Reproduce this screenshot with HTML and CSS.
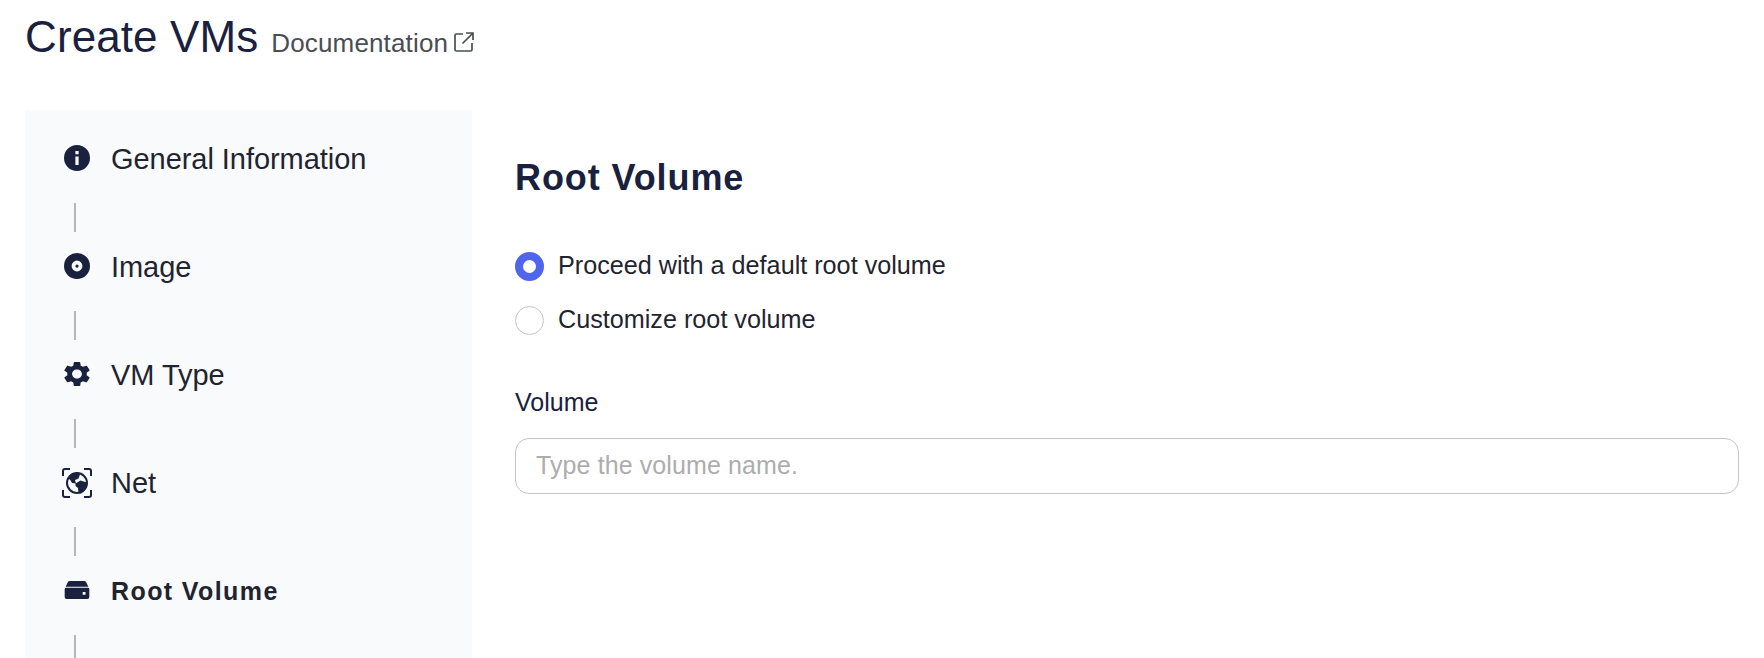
FILE: index.html

```html
<!DOCTYPE html>
<html lang="en">
<head>
  <meta charset="UTF-8">
  <title>Create VMs</title>
  <link rel="stylesheet" href="styles.css">
</head>
<body>

  <header class="page-header">
    <h1 class="page-title">Create VMs</h1>
    <a class="doc-link" href="#">Documentation
      <svg class="doc-icon" viewBox="0 0 20 20"><path d="M9 2H2.500A1.500 1.500 0 0 0 1 3.500V17.500A1.500 1.500 0 0 0 2.500 19H16.500A1.500 1.500 0 0 0 18 17.500V11M12 1H19V8M19 1L8.500 11.500" fill="none" stroke="currentColor" stroke-width="1.700"/></svg>
    </a>
  </header>

  <div class="wizard">
    <nav class="steps">
      <div class="step">
        <svg class="step-icon" viewBox="0 0 24 24"><path fill-rule="evenodd" d="M12 0a12 12 0 1 0 0 24a12 12 0 0 0 0-24zM10.500 5.500h3v3h-3zM10.500 10.500h3v8h-3z"/></svg>
        <span>General Information</span>
      </div>
      <div class="connector"></div>
      <div class="step">
        <svg class="step-icon" viewBox="0 0 24 24"><path fill-rule="evenodd" d="M12 0a12 12 0 1 0 0 24a12 12 0 0 0 0-24zM12 7a5 5 0 1 1 0 10a5 5 0 0 1 0-10z"/><circle cx="12" cy="12" r="1.500"/></svg>
        <span>Image</span>
      </div>
      <div class="connector"></div>
      <div class="step">
        <svg class="step-icon" viewBox="2.400 1.600 19.200 20.800" preserveAspectRatio="none"><path d="M19.140 12.940c.04-.3.060-.61.060-.94 0-.32-.02-.64-.07-.94l2.030-1.580c.18-.14.230-.41.120-.61l-1.920-3.320c-.12-.22-.37-.29-.59-.22l-2.390.96c-.5-.38-1.030-.7-1.620-.94l-.36-2.540c-.04-.24-.24-.41-.48-.41h-3.840c-.24 0-.43.17-.47.41l-.36 2.540c-.59.24-1.130.57-1.620.94l-2.390-.96c-.22-.08-.47 0-.59.22L2.740 8.870c-.12.21-.08.47.12.61l2.030 1.580c-.05.3-.09.63-.09.94s.02.64.07.94l-2.030 1.580c-.18.14-.23.41-.12.61l1.920 3.320c.12.22.37.29.59.22l2.390-.96c.5.38 1.030.7 1.620.94l.36 2.540c.05.24.24.41.48.41h3.840c.24 0 .44-.17.47-.41l.36-2.540c.59-.24 1.130-.56 1.620-.94l2.390.96c.22.08.47 0 .59-.22l1.920-3.320c.12-.22.070-.47-.12-.61l-2.010-1.580zM12 15.600c-1.980 0-3.600-1.620-3.600-3.600s1.620-3.600 3.600-3.600 3.600 1.620 3.600 3.600-1.620 3.600-3.600 3.600z"/></svg>
        <span>VM Type</span>
      </div>
      <div class="connector"></div>
      <div class="step">
        <svg class="step-icon step-icon-net" viewBox="0 0 30 30">
          <path d="M1 8V3a2 2 0 0 1 2-2h5M22 1h5a2 2 0 0 1 2 2v5M29 22v5a2 2 0 0 1-2 2h-5M8 29H3a2 2 0 0 1-2-2v-5" fill="none" stroke="currentColor" stroke-width="2"/>
          <circle cx="15" cy="15" r="10" fill="none" stroke="currentColor" stroke-width="2"/>
          <path d="M6 11l4-5.500 6-1.500 2 2.500-1.500 4-3.500 1.500 1 3.500-4-.5-2-3.500zM13.500 15.500l5-3 6.500 2-1 6-5 5-2.500-.5-.5-5-2.500-2z"/>
        </svg>
        <span>Net</span>
      </div>
      <div class="connector"></div>
      <div class="step step-active">
        <svg class="step-icon step-icon-disk" viewBox="0 0 26 19"><path fill-rule="evenodd" d="M5.500 0H20.500Q22 0 22.700 1.300L25 6H1L3.300 1.300Q4 0 5.500 0zM1.500 7H24.500A1.500 1.500 0 0 1 26 8.500V17A2 2 0 0 1 24 19H2A2 2 0 0 1 0 17V8.500A1.500 1.500 0 0 1 1.500 7zM19 11.500v3h3v-3z"/></svg>
        <span>Root Volume</span>
      </div>
      <div class="connector"></div>
    </nav>

    <main class="panel">
      <h2 class="panel-title">Root Volume</h2>
      <div class="radio-group">
        <label class="radio-row">
          <span class="radio radio-on"></span>
          <span class="radio-text">Proceed with a default root volume</span>
        </label>
        <label class="radio-row">
          <span class="radio"></span>
          <span class="radio-text">Customize root volume</span>
        </label>
      </div>
      <label class="field-label" for="volumeName">Volume</label>
      <input class="field-input" id="volumeName" type="text" placeholder="Type the volume name.">
    </main>
  </div>

</body>
</html>
```

FILE: styles.css

```css
html, body {
  height: 100%;
  overflow: hidden;
}
body {
  margin: 0;
  background-color: #fff;
  color: #1f2430;
  font-family: 'Liberation Sans', Arial, sans-serif;
}
.page-header {
  display: flex;
  align-items: baseline;
  gap: 13px;
  height: 110px;
  padding-left: 25px;
  box-sizing: border-box;
}
.page-title {
  margin: 10px 0 0;
  font-size: 44px;
  font-weight: 400;
  line-height: 54px;
  letter-spacing: 0.1px;
  color: #19213f;
}
.doc-link {
  display: flex;
  align-items: center;
  gap: 6px;
  font-size: 26px;
  letter-spacing: 0.15px;
  color: #4a4d55;
  text-decoration: none;
}
.doc-icon {
  width: 20px;
  height: 20px;
  margin-top: -4px;
}
.wizard {
  display: flex;
  height: 548px;
}
.steps {
  width: 447px;
  margin-left: 25px;
  padding: 27px 0 0 38px;
  box-sizing: border-box;
  background-color: #f8fafc;
  overflow: hidden;
}
.step {
  display: flex;
  align-items: center;
  height: 44px;
  font-size: 29px;
  letter-spacing: -0.05px;
}
.step-icon {
  width: 26px;
  height: 26px;
  margin: 0 21px 2px 1px;
  fill: #19213f;
  color: #19213f;
  flex: none;
}
.step-icon-net {
  width: 30px;
  height: 30px;
  margin: 0 19px 0 -1px;
}
.step-icon-disk {
  height: 18px;
}
.step-active {
  font-size: 25px;
  font-weight: 700;
  letter-spacing: 1.4px;
}
.connector {
  width: 2px;
  height: 29px;
  margin: 22px 0 13px 11px;
  background-color: #b4b6ba;
}
.panel {
  flex: 1;
  padding: 46px 25px 0 43px;
}
.panel-title {
  margin: 0 0 51px;
  font-size: 36px;
  line-height: 44px;
  letter-spacing: 0.9px;
  color: #19213f;
}
.radio-group {
  display: flex;
  flex-direction: column;
  gap: 24px;
  margin-bottom: 53px;
}
.radio-row {
  display: flex;
  align-items: center;
  gap: 14px;
  height: 30px;
  font-size: 25.2px;
}
.radio-text {
  margin-bottom: 2px;
}
.radio {
  width: 29px;
  height: 29px;
  box-sizing: border-box;
  border: 1px solid #c4c4c4;
  border-radius: 50%;
  background-color: #fff;
}
.radio-on {
  border: 8.500px solid #4f65ee;
}
.field-label {
  display: block;
  margin: -1px 0 21px;
  font-size: 25px;
  line-height: 30px;
  color: #19213f;
}
.field-input {
  display: block;
  width: 100%;
  height: 56px;
  box-sizing: border-box;
  padding: 0 20px 2px;
  border: 1px solid #c4c4c4;
  border-radius: 14px;
  background-color: #fff;
  font-family: inherit;
  font-size: 25px;
  letter-spacing: 0.1px;
}
.field-input::placeholder {
  color: #adadad;
}
```
